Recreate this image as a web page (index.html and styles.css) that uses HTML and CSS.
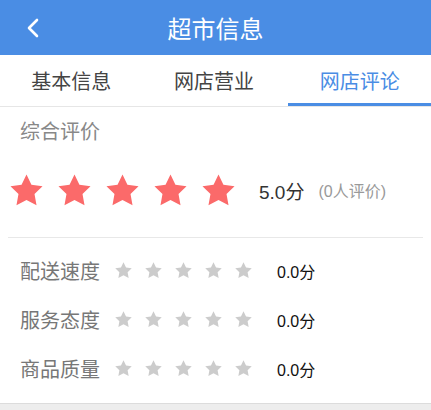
FILE: index.html
```html
<!DOCTYPE html>
<html lang="zh-CN">
<head>
  <meta charset="UTF-8" />
  <title>超市信息</title>
  <link rel="stylesheet" href="styles.css">
</head>
<body>
  <svg class="defs" width="0" height="0">
    <symbol id="star" viewBox="0 0 24 24">
      <path d="M12 1.6l3.2 6.6 7.2 1-5.2 5.1 1.3 7.2L12 18.1l-6.5 3.4 1.3-7.2L1.6 9.2l7.2-1z" />
    </symbol>
  </svg>

  <div class="header">
    <a class="back">
      <svg width="14" height="20" viewBox="0 0 14 20"><path d="M11 2L3 10l8 8" fill="none" stroke="#fff" stroke-width="2.6" stroke-linecap="round" stroke-linejoin="round"/></svg>
    </a>
    <h1>超市信息</h1>
    <span></span>
  </div>

  <div class="tabs">
    <div class="tab">基本信息</div>
    <div class="tab">网店营业</div>
    <div class="tab active">网店评论</div>
  </div>

  <div class="summary">
    <div class="title">综合评价</div>
    <div class="total">
      <div class="stars big">
        <svg><use href="#star" /></svg>
        <svg><use href="#star" /></svg>
        <svg><use href="#star" /></svg>
        <svg><use href="#star" /></svg>
        <svg><use href="#star" /></svg>
      </div>
      <span class="score">5.0分</span>
      <span class="count">(0人评价)</span>
    </div>
  </div>

  <div class="detail">
    <div class="row">
      <span class="label">配送速度</span>
      <div class="stars small">
        <svg><use href="#star" /></svg>
        <svg><use href="#star" /></svg>
        <svg><use href="#star" /></svg>
        <svg><use href="#star" /></svg>
        <svg><use href="#star" /></svg>
      </div>
      <span class="value">0.0分</span>
    </div>
    <div class="row">
      <span class="label">服务态度</span>
      <div class="stars small">
        <svg><use href="#star" /></svg>
        <svg><use href="#star" /></svg>
        <svg><use href="#star" /></svg>
        <svg><use href="#star" /></svg>
        <svg><use href="#star" /></svg>
      </div>
      <span class="value">0.0分</span>
    </div>
    <div class="row">
      <span class="label">商品质量</span>
      <div class="stars small">
        <svg><use href="#star" /></svg>
        <svg><use href="#star" /></svg>
        <svg><use href="#star" /></svg>
        <svg><use href="#star" /></svg>
        <svg><use href="#star" /></svg>
      </div>
      <span class="value">0.0分</span>
    </div>
  </div>

  <div class="footer"></div>
</body>
</html>
```

FILE: styles.css
```css
body {
  margin: 0;
  background: #fff;
  font-family: "Liberation Sans", "Noto Sans CJK SC", sans-serif;
}
.defs {
  position: absolute;
}
.header {
  height: 55px;
  background: #4a8de4;
  display: grid;
  grid-template-columns: 1fr auto 1fr;
  align-items: center;
}
.back {
  padding-left: 26px;
  display: flex;
}
.header h1 {
  margin: 0;
  color: #fff;
  font-size: 24px;
  font-weight: normal;
  font-family: "Noto Sans CJK SC", sans-serif;
}
.tabs {
  display: flex;
  height: 51px;
  border-bottom: 1px solid #e6e6e6;
}
.tab {
  flex: 1;
  display: flex;
  align-items: center;
  justify-content: center;
  font-size: 20px;
  color: #444;
  font-family: "Noto Sans CJK SC", sans-serif;
  border-bottom: 3px solid transparent;
  padding-top: 2px;
}
.tab.active {
  color: #4a8de4;
  border-bottom-color: #4a8de4;
  margin-left: 3px;
}
.summary {
  padding-top: 11px;
}
.title {
  padding-left: 20px;
  font-size: 20px;
  line-height: 28px;
  color: #888;
}
.total {
  display: flex;
  align-items: center;
  margin-top: 26px;
  padding: 0 8px;
  height: 36px;
}
.stars {
  display: flex;
}
.stars svg {
  display: block;
}
.big {
  gap: 11px;
  fill: #fb6a6a;
}
.big svg {
  width: 37px;
  height: 37px;
}
.score {
  margin-left: 22px;
  font-size: 19px;
  color: #333;
}
.count {
  margin-left: 14px;
  font-size: 16px;
  color: #999;
}
.detail {
  margin: 29px 8px 0;
  border-top: 1px solid #e8e8e8;
  padding: 8px 0 10px;
}
.row {
  display: flex;
  align-items: center;
  height: 49px;
}
.label {
  box-sizing: border-box;
  width: 106px;
  padding-left: 12px;
  font-size: 20px;
  color: #777;
}
.small {
  gap: 11px;
  fill: #cccccc;
}
.small svg {
  width: 19px;
  height: 19px;
}
.value {
  margin-left: 24px;
  font-size: 16px;
  color: #111;
}
.footer {
  height: 20px;
  background: #ededed;
  border-top: 1px solid #dcdcdc;
}
```
